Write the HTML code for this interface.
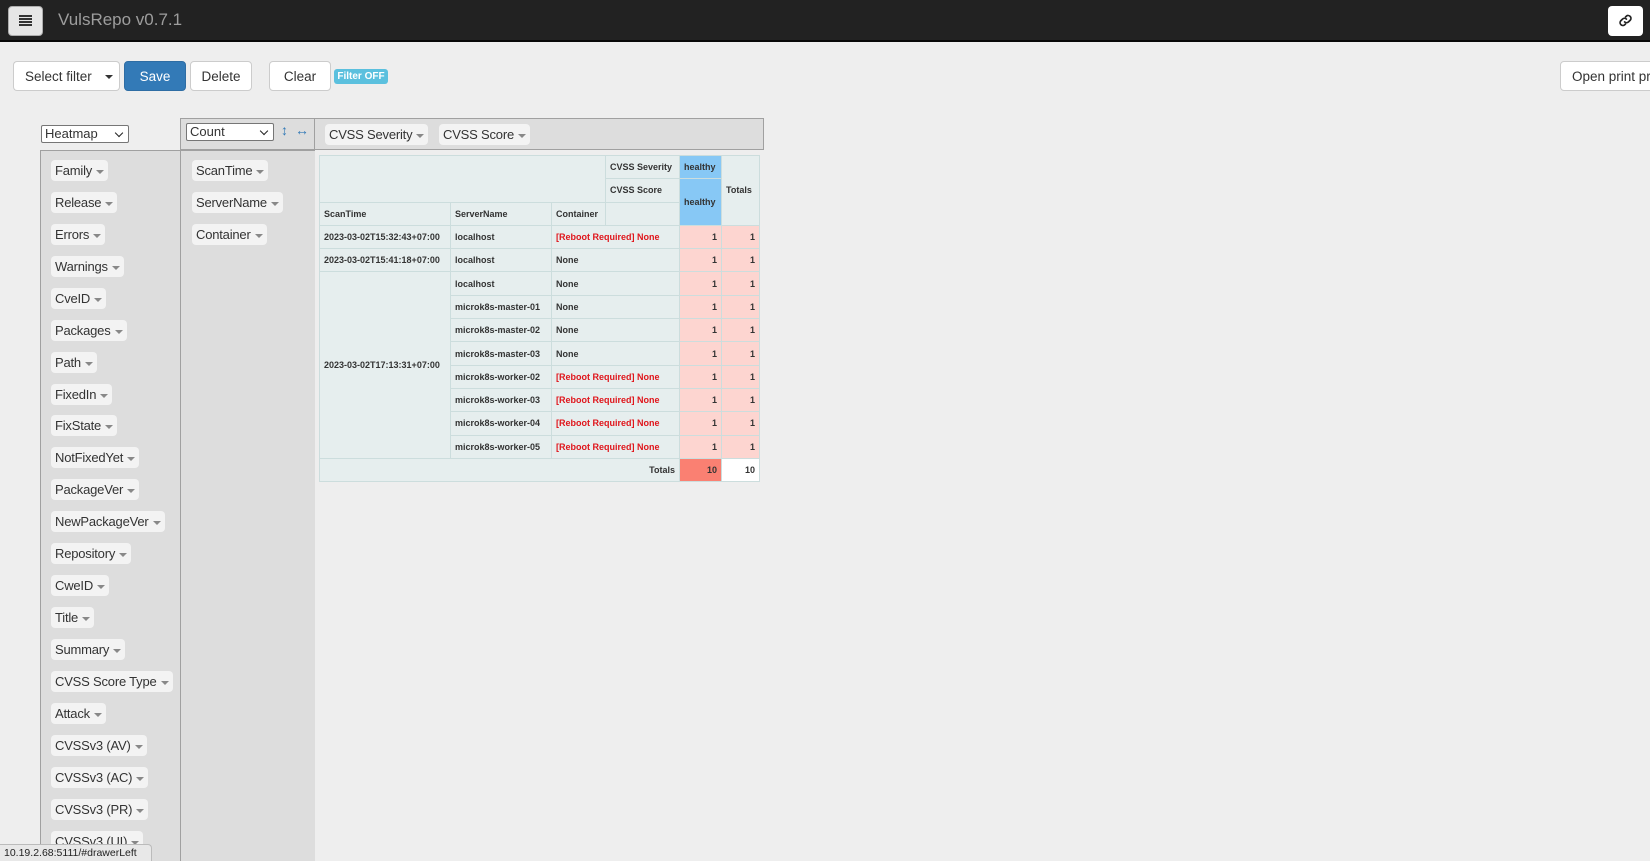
<!DOCTYPE html>
<html><head><meta charset="utf-8"><style>
*{box-sizing:border-box;margin:0;padding:0}
body{width:1650px;height:861px;overflow:hidden;background:#eeeeee;font-family:"Liberation Sans",Arial,sans-serif;position:relative;color:#333}
.a{position:absolute}
.hdr{left:0;top:0;width:1650px;height:42px;background:#222;border-bottom:2px solid #080808}
.btn{position:absolute;background:#fff;border:1px solid #ccc;border-radius:4px;font-size:13.5px;color:#333;display:flex;align-items:center;justify-content:center;white-space:nowrap;overflow:hidden}
.pill{position:absolute;background:#f3f3f3;border-radius:4px;font-size:13px;height:21px;line-height:21px;padding:0 4px;color:#333;white-space:nowrap;letter-spacing:-0.2px}
.pill:after{content:"";display:inline-block;margin-left:4px;border-left:4px solid transparent;border-right:4px solid transparent;border-top:4px solid #888;vertical-align:middle}
table{border-collapse:collapse;font-size:9px;font-weight:bold;color:#333;table-layout:fixed}
td{border:1px solid #cdd;background:#e6eeee;height:23.3px;padding:0 4px;white-space:nowrap;overflow:hidden}
.r{color:#e0151b}
.h{background:#fdd5d0;text-align:right}
.sel{position:absolute;background:#fff;border:1px solid #767676;border-radius:2px;font-size:13px;padding-left:3px;line-height:16px}
.sel:after{content:"";position:absolute;right:6px;top:4px;width:5px;height:5px;border-right:1.5px solid #222;border-bottom:1.5px solid #222;transform:rotate(45deg)}
</style></head><body>
<div class="a hdr"></div>
<div class="a" style="left:8px;top:6px;width:35px;height:30px;background:#e6e6e6;border-radius:4px;border:1px solid #adadad"></div>
<div class="a" style="left:19px;top:15px;width:13px;height:2px;background:#333;box-shadow:0 3px 0 #333,0 6px 0 #333,0 9px 0 #333"></div>
<div class="a" style="left:58px;top:10px;font-size:17px;color:#9d9d9d">VulsRepo v0.7.1</div>
<div class="a" style="left:1608px;top:6px;width:35px;height:30px;background:#fff;border-radius:4px"></div>
<svg class="a" style="left:1618px;top:13px" width="15" height="15" viewBox="0 0 16 16"><g fill="none" stroke="#222" stroke-width="1.8" stroke-linecap="round"><path d="M7 9.5a3 3 0 0 0 4.2 0l2-2a3 3 0 0 0-4.2-4.2l-1 1"/><path d="M9 6.5a3 3 0 0 0-4.2 0l-2 2a3 3 0 0 0 4.2 4.2l1-1"/></g></svg>

<div class="btn" style="left:13px;top:61px;width:86px;height:30px;justify-content:flex-start;padding-left:11px;border-radius:4px 0 0 4px;border-right:none">Select filter</div>
<div class="btn" style="left:98px;top:61px;width:22px;height:30px;border-radius:0 4px 4px 0;border-left:none"></div>
<div class="a" style="left:105px;top:75px;border-left:4px solid transparent;border-right:4px solid transparent;border-top:4px solid #333"></div>
<div class="btn" style="left:124px;top:61px;width:62px;height:30px;background:#337ab7;border-color:#2e6da4;color:#fff">Save</div>
<div class="btn" style="left:190px;top:61px;width:62px;height:30px">Delete</div>
<div class="btn" style="left:269px;top:61px;width:62px;height:30px">Clear</div>
<div class="a" style="left:334px;top:69px;width:54px;height:15px;background:#5bc0de;border-radius:3px;color:#fff;font-size:10px;font-weight:bold;text-align:center;line-height:15px">Filter OFF</div>
<div class="btn" style="left:1560px;top:61px;width:120px;height:30px;justify-content:flex-start;padding-left:11px">Open print preview</div>

<div class="a" style="left:180px;top:118px;width:584px;height:32px;border:1px solid #a0a0a0;background:#dddddd"></div>
<div class="a" style="left:314px;top:118px;width:1px;height:743px;background:#a0a0a0"></div>
<div class="a" style="left:40px;top:150px;width:275px;height:711px;border-top:1px solid #a0a0a0;border-left:1px solid #a0a0a0;background:#dddddd"></div>
<div class="a" style="left:180px;top:118px;width:1px;height:743px;background:#a0a0a0"></div>
<div class="a" style="left:315px;top:151px;width:449px;height:710px;background:#eeeeee"></div>

<div class="sel" style="left:41px;top:125px;width:88px;height:18px">Heatmap</div>
<div class="sel" style="left:186px;top:123px;width:88px;height:18px">Count</div>
<div class="a" style="left:281px;top:122px;color:#337ab7;font-size:14px">↕</div>
<div class="a" style="left:295px;top:122px;color:#337ab7;font-size:14px">↔</div>
<div class="pill" style="left:325px;top:124px">CVSS Severity</div>
<div class="pill" style="left:439px;top:124px">CVSS Score</div>

<div class="pill" style="left:192px;top:160px">ScanTime</div>
<div class="pill" style="left:192px;top:192px">ServerName</div>
<div class="pill" style="left:192px;top:224px">Container</div>

<div class="pill" style="left:51px;top:160px">Family</div>
<div class="pill" style="left:51px;top:192px">Release</div>
<div class="pill" style="left:51px;top:224px">Errors</div>
<div class="pill" style="left:51px;top:256px">Warnings</div>
<div class="pill" style="left:51px;top:288px">CveID</div>
<div class="pill" style="left:51px;top:320px">Packages</div>
<div class="pill" style="left:51px;top:352px">Path</div>
<div class="pill" style="left:51px;top:384px">FixedIn</div>
<div class="pill" style="left:51px;top:415px">FixState</div>
<div class="pill" style="left:51px;top:447px">NotFixedYet</div>
<div class="pill" style="left:51px;top:479px">PackageVer</div>
<div class="pill" style="left:51px;top:511px">NewPackageVer</div>
<div class="pill" style="left:51px;top:543px">Repository</div>
<div class="pill" style="left:51px;top:575px">CweID</div>
<div class="pill" style="left:51px;top:607px">Title</div>
<div class="pill" style="left:51px;top:639px">Summary</div>
<div class="pill" style="left:51px;top:671px">CVSS Score Type</div>
<div class="pill" style="left:51px;top:703px">Attack</div>
<div class="pill" style="left:51px;top:735px">CVSSv3 (AV)</div>
<div class="pill" style="left:51px;top:767px">CVSSv3 (AC)</div>
<div class="pill" style="left:51px;top:799px">CVSSv3 (PR)</div>
<div class="pill" style="left:51px;top:831px">CVSSv3 (UI)</div>

<table class="a" style="left:319px;top:155px;width:440px">
<colgroup><col style="width:131px"><col style="width:101px"><col style="width:54px"><col style="width:74px"><col style="width:42px"><col style="width:38px"></colgroup>
<tr><td colspan="3" rowspan="2"></td><td>CVSS Severity</td><td style="background:#87c8f5">healthy</td><td rowspan="3">Totals</td></tr>
<tr><td>CVSS Score</td><td rowspan="2" style="background:#87c8f5">healthy</td></tr>
<tr><td>ScanTime</td><td>ServerName</td><td>Container</td><td></td></tr>
<tr><td>2023-03-02T15:32:43+07:00</td><td>localhost</td><td colspan="2" class="r">[Reboot Required] None</td><td class="h">1</td><td class="h">1</td></tr>
<tr><td>2023-03-02T15:41:18+07:00</td><td>localhost</td><td colspan="2">None</td><td class="h">1</td><td class="h">1</td></tr>
<tr><td rowspan="8">2023-03-02T17:13:31+07:00</td><td>localhost</td><td colspan="2">None</td><td class="h">1</td><td class="h">1</td></tr>
<tr><td>microk8s-master-01</td><td colspan="2">None</td><td class="h">1</td><td class="h">1</td></tr>
<tr><td>microk8s-master-02</td><td colspan="2">None</td><td class="h">1</td><td class="h">1</td></tr>
<tr><td>microk8s-master-03</td><td colspan="2">None</td><td class="h">1</td><td class="h">1</td></tr>
<tr><td>microk8s-worker-02</td><td colspan="2" class="r">[Reboot Required] None</td><td class="h">1</td><td class="h">1</td></tr>
<tr><td>microk8s-worker-03</td><td colspan="2" class="r">[Reboot Required] None</td><td class="h">1</td><td class="h">1</td></tr>
<tr><td>microk8s-worker-04</td><td colspan="2" class="r">[Reboot Required] None</td><td class="h">1</td><td class="h">1</td></tr>
<tr><td>microk8s-worker-05</td><td colspan="2" class="r">[Reboot Required] None</td><td class="h">1</td><td class="h">1</td></tr>
<tr><td colspan="4" style="text-align:right">Totals</td><td class="h" style="background:#fa8072">10</td><td style="background:#fff;text-align:right">10</td></tr>
</table>

<div class="a" style="left:0;top:844px;width:152px;height:17px;background:#e8e8e8;border:1px solid #bbb;border-left:none;border-bottom:none;border-radius:0 4px 0 0;font-size:10.5px;line-height:16px;padding-left:4px;color:#222;white-space:nowrap;overflow:hidden">10.19.2.68:5111/#drawerLeft</div>
</body></html>
